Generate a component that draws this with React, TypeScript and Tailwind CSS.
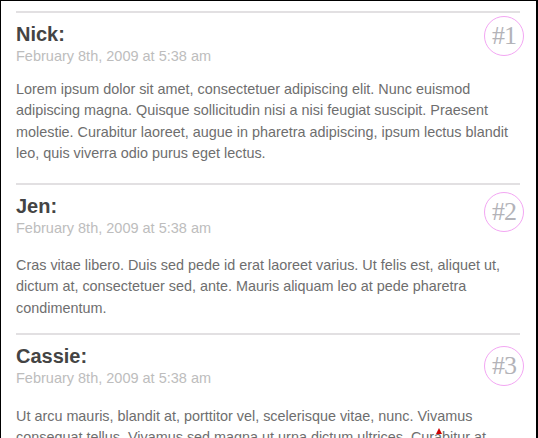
import React from "react";

type Comment = {
  name: string;
  date: string;
  text: string;
  num: number;
  badgeTop: string;
  paraTop: string;
  bottom: string;
};

const comments: Comment[] = [
  {
    name: "Nick:",
    date: "February 8th, 2009 at 5:38 am",
    text: "Lorem ipsum dolor sit amet, consectetuer adipiscing elit. Nunc euismod adipiscing magna. Quisque sollicitudin nisi a nisi feugiat suscipit. Praesent molestie. Curabitur laoreet, augue in pharetra adipiscing, ipsum lectus blandit leo, quis viverra odio purus eget lectus.",
    num: 1,
    badgeTop: "top-[3px]",
    paraTop: "mt-[14px]",
    bottom: "pb-[19px]",
  },
  {
    name: "Jen:",
    date: "February 8th, 2009 at 5:38 am",
    text: "Cras vitae libero. Duis sed pede id erat laoreet varius. Ut felis est, aliquet ut, dictum at, consectetuer sed, ante. Mauris aliquam leo at pede pharetra condimentum.",
    num: 2,
    badgeTop: "top-[7px]",
    paraTop: "mt-[18px]",
    bottom: "pb-[14px]",
  },
  {
    name: "Cassie:",
    date: "February 8th, 2009 at 5:38 am",
    text: "Ut arcu mauris, blandit at, porttitor vel, scelerisque vitae, nunc. Vivamus consequat tellus. Vivamus sed magna ut urna dictum ultrices. Curabitur at nisl. Donec sodales.",
    num: 3,
    badgeTop: "top-[11px]",
    paraTop: "mt-[19px]",
    bottom: "pb-[15px]",
  },
];

export default function App() {
  return (
    <div className="relative w-[538px] h-[438px] overflow-hidden bg-white border-l border-t border-r-2 border-black font-['Liberation_Sans',Arial,sans-serif]">
      <div className="pl-[15px] pr-[16px] pt-[10px] flex flex-col">
        {comments.map((c) => (
          <div key={c.num} className={`relative border-t-2 border-[#e2e0e2] ${c.bottom}`}>
            <div className="pt-[9px] text-[20px] leading-[25px] font-bold text-[#444444]">
              {c.name}
            </div>
            <div className="text-[14.5px] leading-[18px] text-[#bdbdbd]">{c.date}</div>
            <p
              className={`${c.paraTop} w-[494px] text-[14.4px] leading-[21.3px] text-[#6e6e6e]`}
            >
              {c.text}
            </p>
            <div
              className={`absolute ${c.badgeTop} right-[-4px] w-[40px] h-[40px] rounded-full border-[1.5px] border-[#f3a6f3] flex items-center justify-center`}
            >
              <span className="font-['Liberation_Serif',serif] text-[26px] leading-none text-[#b3b3b8] tracking-[-1px]">
                #{c.num}
              </span>
            </div>
          </div>
        ))}
      </div>
      <div className="absolute left-[435px] top-[427px] w-0 h-0 border-l-[3px] border-l-transparent border-r-[3px] border-r-transparent border-b-[6px] border-b-[#d00000]" />
    </div>
  );
}
